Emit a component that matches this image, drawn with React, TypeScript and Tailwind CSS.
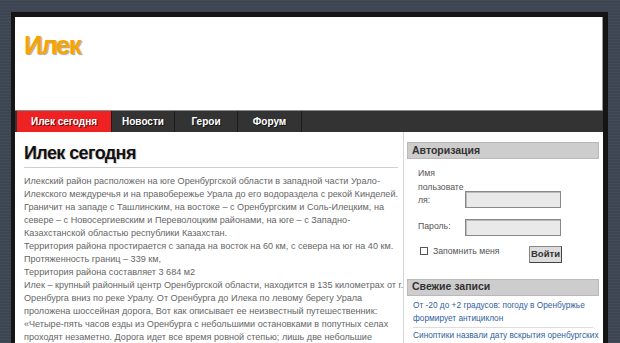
import React from "react";

const NAV = [
  { label: "Илек сегодня", w: "w-[95px]", active: true },
  { label: "Новости", w: "w-[63px]", active: false },
  { label: "Герои", w: "w-[63px]", active: false },
  { label: "Форум", w: "w-[64px]", active: false },
];

const LINES = [
  "Илекский район расположен на юге Оренбургской области в западной части Урало-",
  "Илекского междуречья и на правобережье Урала до его водораздела с рекой Кинделей.",
  "Граничит на западе с Ташлинским, на востоке – с Оренбургским и Соль-Илецким, на",
  "севере – с Новосергиевским и Переволоцким районами, на юге – с Западно-",
  "Казахстанской областью республики Казахстан.",
  "Территория района простирается с запада на восток на 60 км, с севера на юг на 40 км.",
  "Протяженность границ – 339 км,",
  "Территория района составляет 3 684 м2",
  "Илек – крупный районный центр Оренбургской области, находится в 135 километрах от г.",
  "Оренбурга вниз по реке Уралу. От Оренбурга до Илека по левому берегу Урала",
  "проложена шоссейная дорога, Вот как описывает ее неизвестный путешественник:",
  "«Четыре-пять часов езды из Оренбурга с небольшими остановками в попутных селах",
  "проходят незаметно. Дорога идет все время ровной степью; лишь две небольшие",
];

function SideHeader({ title }: { title: string }) {
  return (
    <div className="h-[17px] flex items-center px-[4px] bg-[#cdcdcd] border border-[#b9b9b9] text-[10.5px] font-bold text-[#333]">
      {title}
    </div>
  );
}

function Field() {
  return <div className="w-[96px] h-[17px] border border-[#888] bg-[#e9e9e9] shadow-[inset_1px_1px_0_#bbb]" />;
}

export default function App() {
  return (
    <div
      className="h-[343px] overflow-hidden bg-[#3d4552] pt-[12px] pl-[11px] bg-[repeating-linear-gradient(0deg,rgba(255,255,255,0.03)_0px,rgba(255,255,255,0.03)_1px,transparent_1px,transparent_3px)]"
      style={{ fontFamily: "Arial, 'Liberation Sans', sans-serif" }}
    >
      <div className="w-[597px] h-[400px] bg-white border-l-4 border-r-[5px] border-t-[5px] border-[#151515]">
        {/* Header */}
        <div className="h-[93px] pl-[9px] pt-[13px] border-r border-[#999]">
          <div className="text-[26px] leading-[30px] font-bold text-[#f6a400] tracking-[-1.5px] [text-shadow:1px_1px_1px_rgba(0,0,0,0.35)]">
            Илек
          </div>
        </div>

        {/* Nav */}
        <div className="h-[22px] flex bg-[#333] border-t border-[#8a8a8a] pl-[2px]">
          {NAV.map((n) => (
            <div
              key={n.label}
              className={`${n.w} flex items-center justify-center text-[10px] font-bold text-white [text-shadow:1px_1px_0_rgba(0,0,0,0.6)] border-r border-[#1c1c1c] ${
                n.active ? "bg-[#ee2223]" : ""
              }`}
            >
              {n.label}
            </div>
          ))}
        </div>

        {/* Body */}
        <div className="flex">
          <div className="w-[388px] pl-[9px] pr-[5px]">
            <h1 className="text-[18px] leading-[24px] font-bold text-[#111] pt-[9px] pb-[2px] tracking-[-0.6px] [text-shadow:1px_1px_1px_rgba(0,0,0,0.2)]">
              Илек сегодня
            </h1>
            <div className="h-px bg-[#cfcfcf] mb-[7px]" />
            <div className="text-[9.1px] leading-[13px] text-[#666]">
              {LINES.map((l) => (
                <div key={l} className="whitespace-nowrap">
                  {l}
                </div>
              ))}
            </div>
          </div>

          <div className="w-[200px] border-l border-[#d6d6d6] pl-[3px] pr-[4px] pt-[10px]">
            <SideHeader title="Авторизация" />
            <div className="pl-[11px] pt-[8px] text-[8.7px] text-[#555]">
              <div className="flex items-end">
                <div className="w-[47px] leading-[13.5px]">
                  Имя
                  <br />
                  пользовате
                  <br />
                  ля:
                </div>
                <Field />
              </div>
              <div className="flex items-center mt-[11px]">
                <div className="w-[47px]">Пароль:</div>
                <Field />
              </div>
              <div className="flex items-start mt-[10px]">
                <div className="w-[8px] h-[8px] ml-[2px] mt-[1px] border border-[#555] bg-white" />
                <div className="ml-[5px] w-[96px] leading-[10px]">Запомнить меня</div>
                <div className="w-[33px] h-[17px] flex items-center justify-center bg-[#dcdcdc] border border-[#888] border-r-[#444] border-b-[#444] text-[9.5px] font-bold text-[#333]">
                  Войти
                </div>
              </div>
            </div>

            <div className="mt-[16px]">
              <SideHeader title="Свежие записи" />
            </div>
            <div className="px-[6px] pt-[3px] text-[8.3px] leading-[13px] text-[#2f5f9e]">
              <div className="pb-[2px] border-b border-[#ddd] whitespace-nowrap">
                От -20 до +2 градусов: погоду в Оренбуржье
                <br />
                формирует антициклон
              </div>
              <div className="pt-[1px] whitespace-nowrap">Синоптики назвали дату вскрытия оренбургских</div>
            </div>
          </div>
        </div>
      </div>
    </div>
  );
}
